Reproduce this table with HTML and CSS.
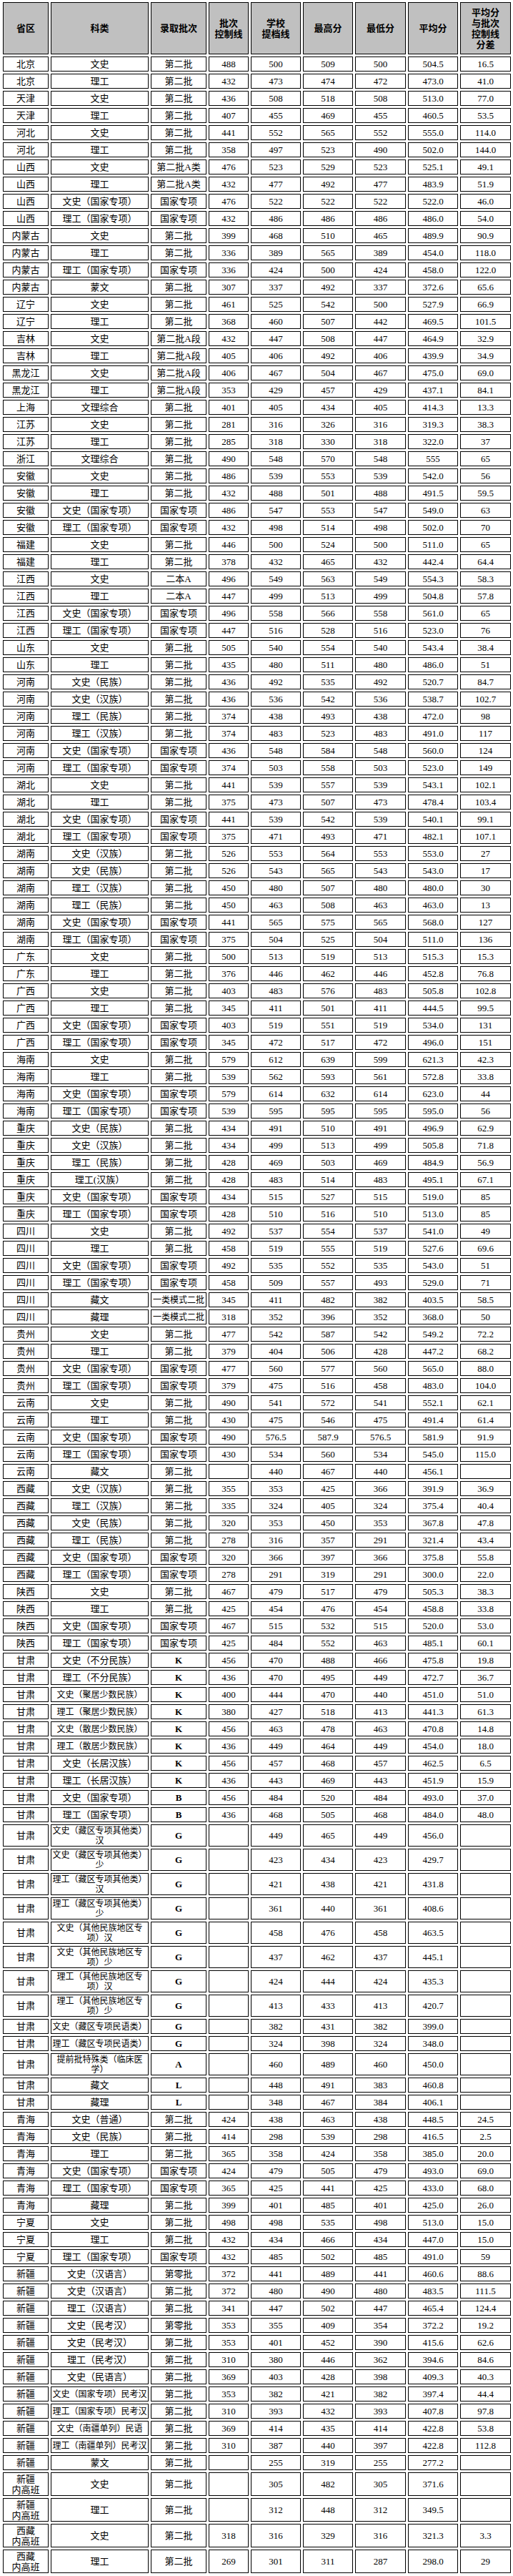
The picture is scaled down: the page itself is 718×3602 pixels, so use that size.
FILE: index.html
```html
<!DOCTYPE html>
<html lang="zh-CN">
<head>
<meta charset="utf-8">
<title>录取分数</title>
<link rel="stylesheet" href="styles.css">
</head>
<body>
<table class="score">
<colgroup>
<col class="c1"><col class="c2"><col class="c3"><col class="c4"><col class="c5"><col class="c6"><col class="c7"><col class="c8"><col class="c9">
</colgroup>
<thead>
<tr><th>省区</th><th>科类</th><th>录取批次</th><th>批次<br>控制线</th><th>学校<br>提档线</th><th>最高分</th><th>最低分</th><th>平均分</th><th>平均分<br>与批次<br>控制线<br>分差</th></tr>
</thead>
<tbody>
<tr><td>北京</td><td>文史</td><td>第二批</td><td>488</td><td>500</td><td>509</td><td>500</td><td>504.5</td><td>16.5</td></tr>
<tr><td>北京</td><td>理工</td><td>第二批</td><td>432</td><td>473</td><td>474</td><td>472</td><td>473.0</td><td>41.0</td></tr>
<tr><td>天津</td><td>文史</td><td>第二批</td><td>436</td><td>508</td><td>518</td><td>508</td><td>513.0</td><td>77.0</td></tr>
<tr><td>天津</td><td>理工</td><td>第二批</td><td>407</td><td>455</td><td>469</td><td>455</td><td>460.5</td><td>53.5</td></tr>
<tr><td>河北</td><td>文史</td><td>第二批</td><td>441</td><td>552</td><td>565</td><td>552</td><td>555.0</td><td>114.0</td></tr>
<tr><td>河北</td><td>理工</td><td>第二批</td><td>358</td><td>497</td><td>523</td><td>490</td><td>502.0</td><td>144.0</td></tr>
<tr><td>山西</td><td>文史</td><td>第二批A类</td><td>476</td><td>523</td><td>529</td><td>523</td><td>525.1</td><td>49.1</td></tr>
<tr><td>山西</td><td>理工</td><td>第二批A类</td><td>432</td><td>477</td><td>492</td><td>477</td><td>483.9</td><td>51.9</td></tr>
<tr><td>山西</td><td>文史（国家专项）</td><td>国家专项</td><td>476</td><td>522</td><td>522</td><td>522</td><td>522.0</td><td>46.0</td></tr>
<tr><td>山西</td><td>理工（国家专项）</td><td>国家专项</td><td>432</td><td>486</td><td>486</td><td>486</td><td>486.0</td><td>54.0</td></tr>
<tr><td>内蒙古</td><td>文史</td><td>第二批</td><td>399</td><td>468</td><td>510</td><td>465</td><td>489.9</td><td>90.9</td></tr>
<tr><td>内蒙古</td><td>理工</td><td>第二批</td><td>336</td><td>389</td><td>565</td><td>389</td><td>454.0</td><td>118.0</td></tr>
<tr><td>内蒙古</td><td>理工（国家专项）</td><td>国家专项</td><td>336</td><td>424</td><td>500</td><td>424</td><td>458.0</td><td>122.0</td></tr>
<tr><td>内蒙古</td><td>蒙文</td><td>第二批</td><td>307</td><td>337</td><td>492</td><td>337</td><td>372.6</td><td>65.6</td></tr>
<tr><td>辽宁</td><td>文史</td><td>第二批</td><td>461</td><td>525</td><td>542</td><td>500</td><td>527.9</td><td>66.9</td></tr>
<tr><td>辽宁</td><td>理工</td><td>第二批</td><td>368</td><td>460</td><td>507</td><td>442</td><td>469.5</td><td>101.5</td></tr>
<tr><td>吉林</td><td>文史</td><td>第二批A段</td><td>432</td><td>447</td><td>508</td><td>447</td><td>464.9</td><td>32.9</td></tr>
<tr><td>吉林</td><td>理工</td><td>第二批A段</td><td>405</td><td>406</td><td>492</td><td>406</td><td>439.9</td><td>34.9</td></tr>
<tr><td>黑龙江</td><td>文史</td><td>第二批A段</td><td>406</td><td>467</td><td>504</td><td>467</td><td>475.0</td><td>69.0</td></tr>
<tr><td>黑龙江</td><td>理工</td><td>第二批A段</td><td>353</td><td>429</td><td>457</td><td>429</td><td>437.1</td><td>84.1</td></tr>
<tr><td>上海</td><td>文理综合</td><td>第二批</td><td>401</td><td>405</td><td>434</td><td>405</td><td>414.3</td><td>13.3</td></tr>
<tr><td>江苏</td><td>文史</td><td>第二批</td><td>281</td><td>316</td><td>326</td><td>316</td><td>319.3</td><td>38.3</td></tr>
<tr><td>江苏</td><td>理工</td><td>第二批</td><td>285</td><td>318</td><td>330</td><td>318</td><td>322.0</td><td>37</td></tr>
<tr><td>浙江</td><td>文理综合</td><td>第二批</td><td>490</td><td>548</td><td>570</td><td>548</td><td>555</td><td>65</td></tr>
<tr><td>安徽</td><td>文史</td><td>第二批</td><td>486</td><td>539</td><td>553</td><td>539</td><td>542.0</td><td>56</td></tr>
<tr><td>安徽</td><td>理工</td><td>第二批</td><td>432</td><td>488</td><td>501</td><td>488</td><td>491.5</td><td>59.5</td></tr>
<tr><td>安徽</td><td>文史（国家专项）</td><td>国家专项</td><td>486</td><td>547</td><td>553</td><td>547</td><td>549.0</td><td>63</td></tr>
<tr><td>安徽</td><td>理工（国家专项）</td><td>国家专项</td><td>432</td><td>498</td><td>514</td><td>498</td><td>502.0</td><td>70</td></tr>
<tr><td>福建</td><td>文史</td><td>第二批</td><td>446</td><td>500</td><td>524</td><td>500</td><td>511.0</td><td>65</td></tr>
<tr><td>福建</td><td>理工</td><td>第二批</td><td>378</td><td>432</td><td>465</td><td>432</td><td>442.4</td><td>64.4</td></tr>
<tr><td>江西</td><td>文史</td><td>二本A</td><td>496</td><td>549</td><td>563</td><td>549</td><td>554.3</td><td>58.3</td></tr>
<tr><td>江西</td><td>理工</td><td>二本A</td><td>447</td><td>499</td><td>513</td><td>499</td><td>504.8</td><td>57.8</td></tr>
<tr><td>江西</td><td>文史（国家专项）</td><td>国家专项</td><td>496</td><td>558</td><td>566</td><td>558</td><td>561.0</td><td>65</td></tr>
<tr><td>江西</td><td>理工（国家专项）</td><td>国家专项</td><td>447</td><td>516</td><td>528</td><td>516</td><td>523.0</td><td>76</td></tr>
<tr><td>山东</td><td>文史</td><td>第二批</td><td>505</td><td>540</td><td>554</td><td>540</td><td>543.4</td><td>38.4</td></tr>
<tr><td>山东</td><td>理工</td><td>第二批</td><td>435</td><td>480</td><td>511</td><td>480</td><td>486.0</td><td>51</td></tr>
<tr><td>河南</td><td>文史（民族）</td><td>第二批</td><td>436</td><td>492</td><td>535</td><td>492</td><td>520.7</td><td>84.7</td></tr>
<tr><td>河南</td><td>文史（汉族）</td><td>第二批</td><td>436</td><td>536</td><td>542</td><td>536</td><td>538.7</td><td>102.7</td></tr>
<tr><td>河南</td><td>理工（民族）</td><td>第二批</td><td>374</td><td>438</td><td>493</td><td>438</td><td>472.0</td><td>98</td></tr>
<tr><td>河南</td><td>理工（汉族）</td><td>第二批</td><td>374</td><td>483</td><td>523</td><td>483</td><td>491.0</td><td>117</td></tr>
<tr><td>河南</td><td>文史（国家专项）</td><td>国家专项</td><td>436</td><td>548</td><td>584</td><td>548</td><td>560.0</td><td>124</td></tr>
<tr><td>河南</td><td>理工（国家专项）</td><td>国家专项</td><td>374</td><td>503</td><td>558</td><td>503</td><td>523.0</td><td>149</td></tr>
<tr><td>湖北</td><td>文史</td><td>第二批</td><td>441</td><td>539</td><td>557</td><td>539</td><td>543.1</td><td>102.1</td></tr>
<tr><td>湖北</td><td>理工</td><td>第二批</td><td>375</td><td>473</td><td>507</td><td>473</td><td>478.4</td><td>103.4</td></tr>
<tr><td>湖北</td><td>文史（国家专项）</td><td>国家专项</td><td>441</td><td>539</td><td>542</td><td>539</td><td>540.1</td><td>99.1</td></tr>
<tr><td>湖北</td><td>理工（国家专项）</td><td>国家专项</td><td>375</td><td>471</td><td>493</td><td>471</td><td>482.1</td><td>107.1</td></tr>
<tr><td>湖南</td><td>文史（汉族）</td><td>第二批</td><td>526</td><td>553</td><td>564</td><td>553</td><td>553.0</td><td>27</td></tr>
<tr><td>湖南</td><td>文史（民族）</td><td>第二批</td><td>526</td><td>543</td><td>565</td><td>543</td><td>543.0</td><td>17</td></tr>
<tr><td>湖南</td><td>理工（汉族）</td><td>第二批</td><td>450</td><td>480</td><td>507</td><td>480</td><td>480.0</td><td>30</td></tr>
<tr><td>湖南</td><td>理工（民族）</td><td>第二批</td><td>450</td><td>463</td><td>508</td><td>463</td><td>463.0</td><td>13</td></tr>
<tr><td>湖南</td><td>文史（国家专项）</td><td>国家专项</td><td>441</td><td>565</td><td>575</td><td>565</td><td>568.0</td><td>127</td></tr>
<tr><td>湖南</td><td>理工（国家专项）</td><td>国家专项</td><td>375</td><td>504</td><td>525</td><td>504</td><td>511.0</td><td>136</td></tr>
<tr><td>广东</td><td>文史</td><td>第二批</td><td>500</td><td>513</td><td>519</td><td>513</td><td>515.3</td><td>15.3</td></tr>
<tr><td>广东</td><td>理工</td><td>第二批</td><td>376</td><td>446</td><td>462</td><td>446</td><td>452.8</td><td>76.8</td></tr>
<tr><td>广西</td><td>文史</td><td>第二批</td><td>403</td><td>483</td><td>576</td><td>483</td><td>505.8</td><td>102.8</td></tr>
<tr><td>广西</td><td>理工</td><td>第二批</td><td>345</td><td>411</td><td>501</td><td>411</td><td>444.5</td><td>99.5</td></tr>
<tr><td>广西</td><td>文史（国家专项）</td><td>国家专项</td><td>403</td><td>519</td><td>551</td><td>519</td><td>534.0</td><td>131</td></tr>
<tr><td>广西</td><td>理工（国家专项）</td><td>国家专项</td><td>345</td><td>472</td><td>517</td><td>472</td><td>496.0</td><td>151</td></tr>
<tr><td>海南</td><td>文史</td><td>第二批</td><td>579</td><td>612</td><td>639</td><td>599</td><td>621.3</td><td>42.3</td></tr>
<tr><td>海南</td><td>理工</td><td>第二批</td><td>539</td><td>562</td><td>593</td><td>561</td><td>572.8</td><td>33.8</td></tr>
<tr><td>海南</td><td>文史（国家专项）</td><td>国家专项</td><td>579</td><td>614</td><td>632</td><td>614</td><td>623.0</td><td>44</td></tr>
<tr><td>海南</td><td>理工（国家专项）</td><td>国家专项</td><td>539</td><td>595</td><td>595</td><td>595</td><td>595.0</td><td>56</td></tr>
<tr><td>重庆</td><td>文史（民族）</td><td>第二批</td><td>434</td><td>491</td><td>510</td><td>491</td><td>496.9</td><td>62.9</td></tr>
<tr><td>重庆</td><td>文史（汉族）</td><td>第二批</td><td>434</td><td>499</td><td>513</td><td>499</td><td>505.8</td><td>71.8</td></tr>
<tr><td>重庆</td><td>理工（民族）</td><td>第二批</td><td>428</td><td>469</td><td>503</td><td>469</td><td>484.9</td><td>56.9</td></tr>
<tr><td>重庆</td><td>理工(汉族）</td><td>第二批</td><td>428</td><td>483</td><td>514</td><td>483</td><td>495.1</td><td>67.1</td></tr>
<tr><td>重庆</td><td>文史（国家专项）</td><td>国家专项</td><td>434</td><td>515</td><td>527</td><td>515</td><td>519.0</td><td>85</td></tr>
<tr><td>重庆</td><td>理工（国家专项）</td><td>国家专项</td><td>428</td><td>510</td><td>516</td><td>510</td><td>513.0</td><td>85</td></tr>
<tr><td>四川</td><td>文史</td><td>第二批</td><td>492</td><td>537</td><td>554</td><td>537</td><td>541.0</td><td>49</td></tr>
<tr><td>四川</td><td>理工</td><td>第二批</td><td>458</td><td>519</td><td>555</td><td>519</td><td>527.6</td><td>69.6</td></tr>
<tr><td>四川</td><td>文史（国家专项）</td><td>国家专项</td><td>492</td><td>535</td><td>552</td><td>535</td><td>543.0</td><td>51</td></tr>
<tr><td>四川</td><td>理工（国家专项）</td><td>国家专项</td><td>458</td><td>509</td><td>557</td><td>493</td><td>529.0</td><td>71</td></tr>
<tr><td>四川</td><td>藏文</td><td class="sm">一类模式二批</td><td>345</td><td>411</td><td>482</td><td>382</td><td>403.5</td><td>58.5</td></tr>
<tr><td>四川</td><td>藏理</td><td class="sm">一类模式二批</td><td>318</td><td>352</td><td>396</td><td>352</td><td>368.0</td><td>50</td></tr>
<tr><td>贵州</td><td>文史</td><td>第二批</td><td>477</td><td>542</td><td>587</td><td>542</td><td>549.2</td><td>72.2</td></tr>
<tr><td>贵州</td><td>理工</td><td>第二批</td><td>379</td><td>404</td><td>506</td><td>428</td><td>447.2</td><td>68.2</td></tr>
<tr><td>贵州</td><td>文史（国家专项）</td><td>国家专项</td><td>477</td><td>560</td><td>577</td><td>560</td><td>565.0</td><td>88.0</td></tr>
<tr><td>贵州</td><td>理工（国家专项）</td><td>国家专项</td><td>379</td><td>475</td><td>516</td><td>458</td><td>483.0</td><td>104.0</td></tr>
<tr><td>云南</td><td>文史</td><td>第二批</td><td>490</td><td>541</td><td>572</td><td>541</td><td>552.1</td><td>62.1</td></tr>
<tr><td>云南</td><td>理工</td><td>第二批</td><td>430</td><td>475</td><td>546</td><td>475</td><td>491.4</td><td>61.4</td></tr>
<tr><td>云南</td><td>文史（国家专项）</td><td>国家专项</td><td>490</td><td>576.5</td><td>587.9</td><td>576.5</td><td>581.9</td><td>91.9</td></tr>
<tr><td>云南</td><td>理工（国家专项）</td><td>国家专项</td><td>430</td><td>534</td><td>560</td><td>534</td><td>545.0</td><td>115.0</td></tr>
<tr><td>云南</td><td>藏文</td><td>第二批</td><td></td><td>440</td><td>467</td><td>440</td><td>456.1</td><td></td></tr>
<tr><td>西藏</td><td>文史（汉族）</td><td>第二批</td><td>355</td><td>353</td><td>425</td><td>366</td><td>391.9</td><td>36.9</td></tr>
<tr><td>西藏</td><td>理工（汉族）</td><td>第二批</td><td>335</td><td>324</td><td>405</td><td>324</td><td>375.4</td><td>40.4</td></tr>
<tr><td>西藏</td><td>文史（民族）</td><td>第二批</td><td>320</td><td>353</td><td>450</td><td>353</td><td>367.8</td><td>47.8</td></tr>
<tr><td>西藏</td><td>理工（民族）</td><td>第二批</td><td>278</td><td>316</td><td>357</td><td>291</td><td>321.4</td><td>43.4</td></tr>
<tr><td>西藏</td><td>文史（国家专项）</td><td>国家专项</td><td>320</td><td>366</td><td>397</td><td>366</td><td>375.8</td><td>55.8</td></tr>
<tr><td>西藏</td><td>理工（国家专项）</td><td>国家专项</td><td>278</td><td>291</td><td>319</td><td>291</td><td>300.0</td><td>22.0</td></tr>
<tr><td>陕西</td><td>文史</td><td>第二批</td><td>467</td><td>479</td><td>517</td><td>479</td><td>505.3</td><td>38.3</td></tr>
<tr><td>陕西</td><td>理工</td><td>第二批</td><td>425</td><td>454</td><td>476</td><td>454</td><td>458.8</td><td>33.8</td></tr>
<tr><td>陕西</td><td>文史（国家专项）</td><td>国家专项</td><td>467</td><td>515</td><td>532</td><td>515</td><td>520.0</td><td>53.0</td></tr>
<tr><td>陕西</td><td>理工（国家专项）</td><td>国家专项</td><td>425</td><td>484</td><td>552</td><td>463</td><td>485.1</td><td>60.1</td></tr>
<tr><td>甘肃</td><td>文史（不分民族）</td><td class="b">K</td><td>456</td><td>470</td><td>488</td><td>466</td><td>475.8</td><td>19.8</td></tr>
<tr><td>甘肃</td><td>理工（不分民族）</td><td class="b">K</td><td>436</td><td>470</td><td>495</td><td>449</td><td>472.7</td><td>36.7</td></tr>
<tr><td>甘肃</td><td class="sm">文史（聚居少数民族）</td><td class="b">K</td><td>400</td><td>444</td><td>470</td><td>440</td><td>451.0</td><td>51.0</td></tr>
<tr><td>甘肃</td><td class="sm">理工（聚居少数民族）</td><td class="b">K</td><td>380</td><td>427</td><td>518</td><td>413</td><td>441.3</td><td>61.3</td></tr>
<tr><td>甘肃</td><td class="sm">文史（散居少数民族）</td><td class="b">K</td><td>456</td><td>463</td><td>478</td><td>463</td><td>470.8</td><td>14.8</td></tr>
<tr><td>甘肃</td><td class="sm">理工（散居少数民族）</td><td class="b">K</td><td>436</td><td>449</td><td>464</td><td>449</td><td>454.0</td><td>18.0</td></tr>
<tr><td>甘肃</td><td>文史（长居汉族）</td><td class="b">K</td><td>456</td><td>457</td><td>468</td><td>457</td><td>462.5</td><td>6.5</td></tr>
<tr><td>甘肃</td><td>理工（长居汉族）</td><td class="b">K</td><td>436</td><td>443</td><td>469</td><td>443</td><td>451.9</td><td>15.9</td></tr>
<tr><td>甘肃</td><td>文史（国家专项）</td><td class="b">B</td><td>456</td><td>484</td><td>520</td><td>484</td><td>493.0</td><td>37.0</td></tr>
<tr><td>甘肃</td><td>理工（国家专项）</td><td class="b">B</td><td>436</td><td>468</td><td>505</td><td>468</td><td>484.0</td><td>48.0</td></tr>
<tr class="r2"><td>甘肃</td><td class="sm">文史（藏区专项其他类）<br>汉</td><td class="b">G</td><td></td><td>449</td><td>465</td><td>449</td><td>456.0</td><td></td></tr>
<tr class="r2"><td>甘肃</td><td class="sm">文史（藏区专项其他类）<br>少</td><td class="b">G</td><td></td><td>423</td><td>434</td><td>423</td><td>429.7</td><td></td></tr>
<tr class="r2"><td>甘肃</td><td class="sm">理工（藏区专项其他类）<br>汉</td><td class="b">G</td><td></td><td>421</td><td>438</td><td>421</td><td>431.8</td><td></td></tr>
<tr class="r2"><td>甘肃</td><td class="sm">理工（藏区专项其他类）<br>少</td><td class="b">G</td><td></td><td>361</td><td>440</td><td>361</td><td>408.6</td><td></td></tr>
<tr class="r2"><td>甘肃</td><td class="sm">文史（其他民族地区专<br>项）汉</td><td class="b">G</td><td></td><td>458</td><td>476</td><td>458</td><td>463.5</td><td></td></tr>
<tr class="r2"><td>甘肃</td><td class="sm">文史（其他民族地区专<br>项）少</td><td class="b">G</td><td></td><td>437</td><td>462</td><td>437</td><td>445.1</td><td></td></tr>
<tr class="r2"><td>甘肃</td><td class="sm">理工（其他民族地区专<br>项）汉</td><td class="b">G</td><td></td><td>424</td><td>444</td><td>424</td><td>435.3</td><td></td></tr>
<tr class="r2"><td>甘肃</td><td class="sm">理工（其他民族地区专<br>项）少</td><td class="b">G</td><td></td><td>413</td><td>433</td><td>413</td><td>420.7</td><td></td></tr>
<tr><td>甘肃</td><td class="sm">文史（藏区专项民语类）</td><td class="b">G</td><td></td><td>382</td><td>431</td><td>382</td><td>399.0</td><td></td></tr>
<tr><td>甘肃</td><td class="sm">理工（藏区专项民语类）</td><td class="b">G</td><td></td><td>324</td><td>398</td><td>324</td><td>348.0</td><td></td></tr>
<tr class="r2"><td>甘肃</td><td class="sm">提前批特殊类（临床医<br>学）</td><td class="b">A</td><td></td><td>460</td><td>489</td><td>460</td><td>450.0</td><td></td></tr>
<tr><td>甘肃</td><td>藏文</td><td class="b">L</td><td></td><td>448</td><td>491</td><td>383</td><td>460.8</td><td></td></tr>
<tr><td>甘肃</td><td>藏理</td><td class="b">L</td><td></td><td>348</td><td>467</td><td>384</td><td>406.1</td><td></td></tr>
<tr><td>青海</td><td>文史（普通）</td><td>第二批</td><td>424</td><td>438</td><td>463</td><td>438</td><td>448.5</td><td>24.5</td></tr>
<tr><td>青海</td><td>文史（民族）</td><td>第二批</td><td>414</td><td>298</td><td>539</td><td>298</td><td>416.5</td><td>2.5</td></tr>
<tr><td>青海</td><td>理工</td><td>第二批</td><td>365</td><td>358</td><td>424</td><td>358</td><td>385.0</td><td>20.0</td></tr>
<tr><td>青海</td><td>文史（国家专项）</td><td>国家专项</td><td>424</td><td>479</td><td>505</td><td>479</td><td>493.0</td><td>69.0</td></tr>
<tr><td>青海</td><td>理工（国家专项）</td><td>国家专项</td><td>365</td><td>425</td><td>441</td><td>425</td><td>433.0</td><td>68.0</td></tr>
<tr><td>青海</td><td>藏理</td><td>第二批</td><td>399</td><td>401</td><td>485</td><td>401</td><td>425.0</td><td>26.0</td></tr>
<tr><td>宁夏</td><td>文史</td><td>第二批</td><td>498</td><td>498</td><td>535</td><td>498</td><td>513.0</td><td>15.0</td></tr>
<tr><td>宁夏</td><td>理工</td><td>第二批</td><td>432</td><td>434</td><td>466</td><td>434</td><td>447.0</td><td>15.0</td></tr>
<tr><td>宁夏</td><td>理工（国家专项）</td><td>国家专项</td><td>432</td><td>485</td><td>502</td><td>485</td><td>491.0</td><td>59</td></tr>
<tr><td>新疆</td><td>文史（汉语言）</td><td>第零批</td><td>372</td><td>441</td><td>489</td><td>441</td><td>460.6</td><td>88.6</td></tr>
<tr><td>新疆</td><td>文史（汉语言）</td><td>第二批</td><td>372</td><td>480</td><td>490</td><td>480</td><td>483.5</td><td>111.5</td></tr>
<tr><td>新疆</td><td>理工（汉语言）</td><td>第二批</td><td>341</td><td>447</td><td>502</td><td>447</td><td>465.4</td><td>124.4</td></tr>
<tr><td>新疆</td><td>文史（民考汉）</td><td>第零批</td><td>353</td><td>355</td><td>409</td><td>354</td><td>372.2</td><td>19.2</td></tr>
<tr><td>新疆</td><td>文史（民考汉）</td><td>第二批</td><td>353</td><td>401</td><td>452</td><td>390</td><td>415.6</td><td>62.6</td></tr>
<tr><td>新疆</td><td>理工（民考汉）</td><td>第二批</td><td>310</td><td>380</td><td>446</td><td>362</td><td>394.6</td><td>84.6</td></tr>
<tr><td>新疆</td><td>文史（民语言）</td><td>第二批</td><td>369</td><td>403</td><td>428</td><td>398</td><td>409.3</td><td>40.3</td></tr>
<tr><td>新疆</td><td class="sm">文史（国家专项）民考汉</td><td>第二批</td><td>353</td><td>382</td><td>421</td><td>382</td><td>397.4</td><td>44.4</td></tr>
<tr><td>新疆</td><td class="sm">理工（国家专项）民考汉</td><td>第二批</td><td>310</td><td>393</td><td>432</td><td>393</td><td>407.8</td><td>97.8</td></tr>
<tr><td>新疆</td><td class="sm">文史（南疆单列）民语</td><td>第二批</td><td>369</td><td>414</td><td>435</td><td>414</td><td>422.8</td><td>53.8</td></tr>
<tr><td>新疆</td><td class="sm">理工（南疆单列）民考汉</td><td>第二批</td><td>310</td><td>387</td><td>440</td><td>397</td><td>422.8</td><td>112.8</td></tr>
<tr><td>新疆</td><td>蒙文</td><td>第二批</td><td></td><td>255</td><td>319</td><td>255</td><td>277.2</td><td></td></tr>
<tr class="r3"><td>新疆<br>内高班</td><td>文史</td><td>第二批</td><td></td><td>305</td><td>482</td><td>305</td><td>371.6</td><td></td></tr>
<tr class="r3"><td>新疆<br>内高班</td><td>理工</td><td>第二批</td><td></td><td>312</td><td>448</td><td>312</td><td>349.5</td><td></td></tr>
<tr class="r3"><td>西藏<br>内高班</td><td>文史</td><td>第二批</td><td>318</td><td>316</td><td>329</td><td>316</td><td>321.3</td><td>3.3</td></tr>
<tr class="r3"><td>西藏<br>内高班</td><td>理工</td><td>第二批</td><td>269</td><td>301</td><td>311</td><td>287</td><td>298.0</td><td>29</td></tr>
</tbody>
</table>
</body>
</html>
```

FILE: styles.css
```css
html, body {
  margin: 0;
  padding: 0;
  background: #ffffff;
}

body {
  font-family: "Liberation Serif", "Noto Sans CJK SC", serif;
  color: #000000;
}

.score {
  border-collapse: separate;
  border-spacing: 3px;
  table-layout: fixed;
  width: 717px;
  margin-left: 1px;
}

.score .c1 { width: 64px; }
.score .c2 { width: 137px; }
.score .c3 { width: 78px; }
.score .c4 { width: 56px; }
.score .c5 { width: 70px; }
.score .c6 { width: 70px; }
.score .c7 { width: 71px; }
.score .c8 { width: 70px; }
.score .c9 { width: 71px; }

.score th,
.score td {
  border: 1px solid #000000;
  padding: 0;
  text-align: center;
  vertical-align: middle;
  color: #000000;
  overflow: visible;
}

.score th {
  background: #c0c0c0;
  height: 71px;
  font-size: 13px;
  font-weight: bold;
  line-height: 15px;
}

.score td {
  height: 19px;
  font-size: 13px;
  line-height: 14px;
  white-space: nowrap;
}

.score td.sm {
  font-size: 12px;
}

.score td.b {
  font-weight: bold;
}

.score tr.r2 td {
  height: 29px;
  line-height: 14px;
}

.score tr.r3 td {
  height: 31px;
  line-height: 15px;
}
```
